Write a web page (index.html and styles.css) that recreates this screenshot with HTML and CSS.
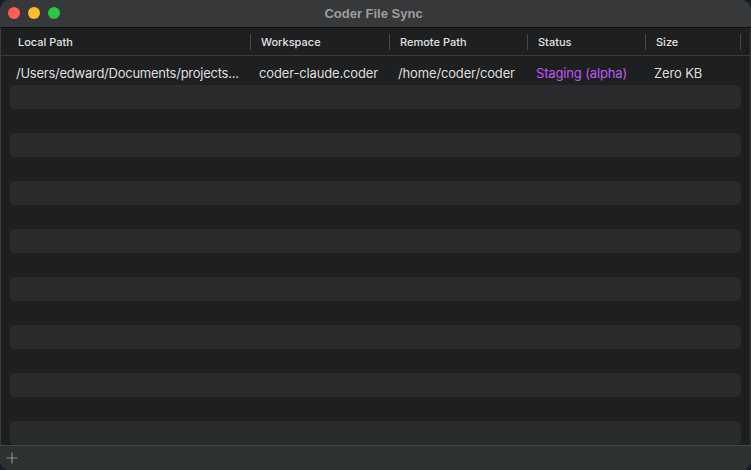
FILE: index.html
```html
<!DOCTYPE html>
<html>
<head>
<meta charset="utf-8">
<link rel="stylesheet" href="styles.css">
</head>
<body>
<div class="window">
  <div class="titlebar">
    <div class="lights">
      <span class="light red"></span>
      <span class="light yellow"></span>
      <span class="light green"></span>
    </div>
    <div class="title">Coder File Sync</div>
  </div>
  <div class="header">
    <div class="hcell c1">Local Path</div>
    <div class="hcell c2">Workspace</div>
    <div class="hcell c3">Remote Path</div>
    <div class="hcell c4">Status</div>
    <div class="hcell c5">Size</div>
  </div>
  <div class="body">
    <div class="row">
      <div class="cell c1">/Users/edward/Documents/projects...</div>
      <div class="cell c2">coder-claude.coder</div>
      <div class="cell c3">/home/coder/coder</div>
      <div class="cell c4 status">Staging (alpha)</div>
      <div class="cell c5">Zero KB</div>
    </div>
    <div class="row stripe"></div>
    <div class="row"></div>
    <div class="row stripe"></div>
    <div class="row"></div>
    <div class="row stripe"></div>
    <div class="row"></div>
    <div class="row stripe"></div>
    <div class="row"></div>
    <div class="row stripe"></div>
    <div class="row"></div>
    <div class="row stripe"></div>
    <div class="row"></div>
    <div class="row stripe"></div>
    <div class="row"></div>
    <div class="row stripe"></div>
  </div>
  <div class="bottombar">
    <svg class="plus" width="12" height="12" viewBox="0 0 12 12"><path d="M6 0.5V11.5M0.5 6H11.5" stroke="#8a8c8d" stroke-width="1.2" fill="none"/></svg>
  </div>
</div>
</body>
</html>
```

FILE: styles.css
```css
* { box-sizing: border-box; }
html, body { margin: 0; padding: 0; }
body {
  width: 751px;
  height: 470px;
  background: #1a1c29;
  overflow: hidden;
  font-family: "Liberation Sans", Arial, sans-serif;
}
.window {
  width: 751px;
  height: 470px;
  border-radius: 10px;
  overflow: hidden;
  background: #1e1f21;
  display: flex;
  flex-direction: column;
  box-shadow: inset 1px 0 0 #3a3c3e, inset -1px 0 0 #3a3c3e;
}
.titlebar {
  height: 28px;
  flex: none;
  background: #363839;
  border-bottom: 1px solid #0f1011;
  position: relative;
  display: flex;
  align-items: center;
  justify-content: center;
}
.lights {
  position: absolute;
  left: 8px;
  top: 7px;
  display: flex;
  gap: 8px;
}
.light {
  width: 12px;
  height: 12px;
  border-radius: 50%;
  display: block;
}
.red { background: #fe5f57; }
.yellow { background: #febc2e; }
.green { background: #28c840; }
.title {
  color: #9d9e9f;
  font-size: 13px;
  font-weight: bold;
  margin-right: 4px;
}
.header {
  height: 28px;
  flex: none;
  display: grid;
  grid-template-columns: 240px 139px 138px 118px 95px;
  padding-left: 11px;
  border-bottom: 1px solid #3b3c3e;
  align-items: center;
}
.hcell {
  color: #e2e2e2;
  font-family: "Inter", "Liberation Sans", sans-serif;
  font-size: 11px;
  font-weight: 500;
  padding-left: 10px;
  height: 16px;
  line-height: 16px;
  border-right: 1px solid #48494b;
}
.hcell.c1 { padding-left: 7px; }
.body {
  flex: 1;
  padding-top: 5px;
}
.row {
  height: 24px;
  display: grid;
  grid-template-columns: 240px 139px 138px 118px 95px;
  margin: 0 10px;
  align-items: center;
}
.row.stripe {
  background: #2a2b2d;
  border-radius: 5px;
}
.cell {
  color: #dedede;
  font-family: "Inter", "Liberation Sans", sans-serif;
  font-size: 13px;
  letter-spacing: -0.15px;
  padding-left: 9px;
  white-space: nowrap;
  overflow: hidden;
}
.cell.c1 { padding-left: 6px; letter-spacing: -0.25px; }
.status { color: #bf5af2; }
.bottombar {
  height: 25px;
  flex: none;
  background: #2e3132;
  border-top: 1px solid #444748;
  display: flex;
  align-items: center;
  padding-left: 6px;
}
.plus { display: block; }
```
